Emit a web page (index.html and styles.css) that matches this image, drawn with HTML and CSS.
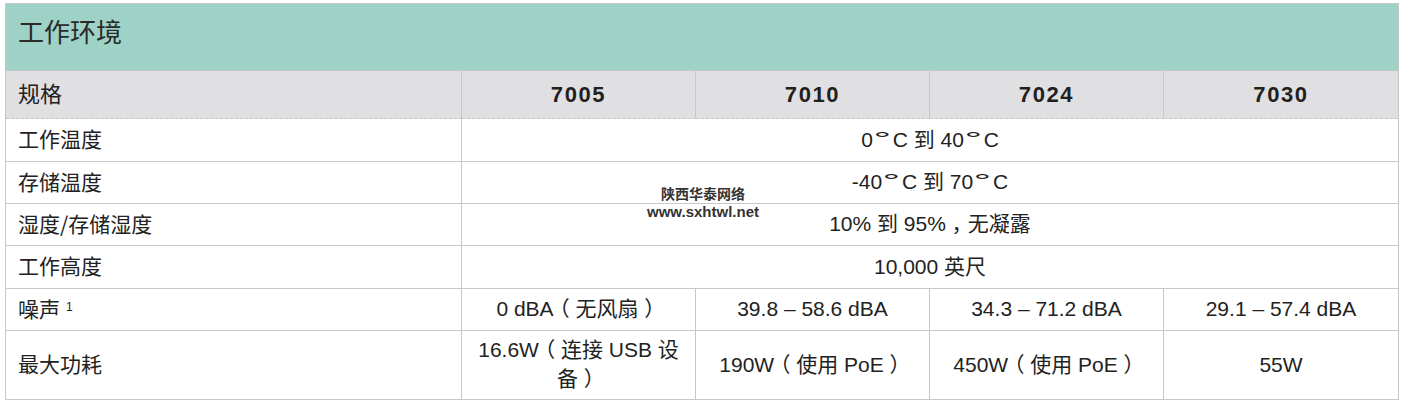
FILE: index.html
```html
<!DOCTYPE html>
<html lang="zh-CN">
<head>
<meta charset="utf-8">
<title>工作环境</title>
<link rel="stylesheet" href="styles.css">
</head>
<body>
<div class="panel">
  <div class="title">工作环境</div>
  <div class="grid">
    <div class="cell head label">规格</div>
    <div class="cell head model">7005</div>
    <div class="cell head model">7010</div>
    <div class="cell head model">7024</div>
    <div class="cell head model last">7030</div>

    <div class="cell label">工作温度</div>
    <div class="cell value span4 last"><span class="v">0<span class="deg">°</span>C 到 40<span class="deg">°</span>C</span></div>

    <div class="cell label">存储温度</div>
    <div class="cell value span4 last"><span class="v">-40<span class="deg">°</span>C 到 70<span class="deg">°</span>C</span></div>

    <div class="cell label">湿度/存储湿度</div>
    <div class="cell value span4 last"><span class="v">10% 到 95%<span class="p">，</span>无凝露</span></div>

    <div class="cell label">工作高度</div>
    <div class="cell value span4 last"><span class="v">10,000 英尺</span></div>

    <div class="cell label"><span>噪声<sup class="note">1</sup></span></div>
    <div class="cell value"><span class="v">0 dBA<span class="p">（</span>无风扇<span class="p">）</span></span></div>
    <div class="cell value"><span class="v">39.8 – 58.6 dBA</span></div>
    <div class="cell value"><span class="v">34.3 – 71.2 dBA</span></div>
    <div class="cell value last"><span class="v">29.1 – 57.4 dBA</span></div>

    <div class="cell label bottom">最大功耗</div>
    <div class="cell value bottom"><span class="v">16.6W<span class="p">（</span>连接 USB 设备<span class="p">）</span></span></div>
    <div class="cell value bottom"><span class="v">190W<span class="p">（</span>使用 PoE<span class="p">）</span></span></div>
    <div class="cell value bottom"><span class="v">450W<span class="p">（</span>使用 PoE<span class="p">）</span></span></div>
    <div class="cell value bottom last"><span class="v">55W</span></div>
  </div>
  <div class="watermark">
    <div class="wm-cn">陕西华泰网络</div>
    <div class="wm-url">www.sxhtwl.net</div>
  </div>
</div>
</body>
</html>
```

FILE: styles.css
```css
html, body {
  margin: 0;
  padding: 0;
  background: #ffffff;
}

body {
  padding: 3px 0 0 5px;
  font-family: "Liberation Sans", Arial, "Noto Sans CJK SC", sans-serif;
  color: #222222;
}

.panel {
  position: relative;
  width: 1394px;
  box-sizing: border-box;
  border: 1px solid #c8c8c8;
}

.title {
  height: 67px;
  box-sizing: border-box;
  background: #9fd2c6;
  border-bottom: 1px solid #c2c8c6;
  display: flex;
  align-items: center;
  padding: 0 0 14px 12px;
  font-family: "Noto Sans CJK SC", sans-serif;
  font-size: 26px;
  color: #2a2a2a;
}

.grid {
  display: grid;
  grid-template-columns: 456px 234px 234px 234px 234px;
  grid-template-rows: 48px 43px 42px 42px 43px 42px 68px;
}

.cell {
  box-sizing: border-box;
  display: flex;
  align-items: center;
  border-right: 1px solid #c8c8c8;
  border-bottom: 1px solid #c8c8c8;
  font-size: 21px;
  line-height: 28px;
}

.cell.last {
  border-right: none;
}

.cell.bottom {
  border-bottom: none;
}

.head {
  background: #e0e0e2;
  border-bottom: 1px dashed #c8c8c8;
}

.label {
  padding-left: 12px;
  padding-bottom: 4px;
  font-family: "Noto Sans CJK SC", sans-serif;
  font-size: 21px;
}

.head.label {
  font-size: 22px;
  padding-bottom: 6px;
}

.model {
  justify-content: center;
  font-weight: bold;
  font-size: 22px;
  letter-spacing: 1.6px;
  color: #231f1c;
}

.value {
  justify-content: center;
  text-align: center;
  padding: 0 12px 2px;
  line-height: 29px;
}

.span4 {
  grid-column: span 4;
}

.p {
  display: inline-block;
  width: 18px;
  margin: 0 2px;
  text-align: center;
  line-height: 24px;
  font-family: "Noto Sans CJK SC", sans-serif;
  font-feature-settings: "halt" 1;
}

.deg {
  display: inline-block;
  font-size: 22px;
  line-height: 1;
  transform: scale(2, 0.8);
  transform-origin: 50% 25%;
  margin: 0 6px 0 5px;
}

.note {
  font-family: "Liberation Sans", Arial, sans-serif;
  font-size: 12px;
  margin-left: 6px;
  vertical-align: 6px;
  line-height: 1;
}

.watermark {
  position: absolute;
  left: 641px;
  top: 181px;
  width: 112px;
  text-align: center;
  font-weight: bold;
  color: #333333;
  font-family: "Liberation Sans", Arial, "Noto Sans CJK SC", sans-serif;
}

.wm-cn {
  font-size: 14px;
  line-height: 18px;
}

.wm-url {
  font-size: 15px;
  line-height: 18px;
}
```
